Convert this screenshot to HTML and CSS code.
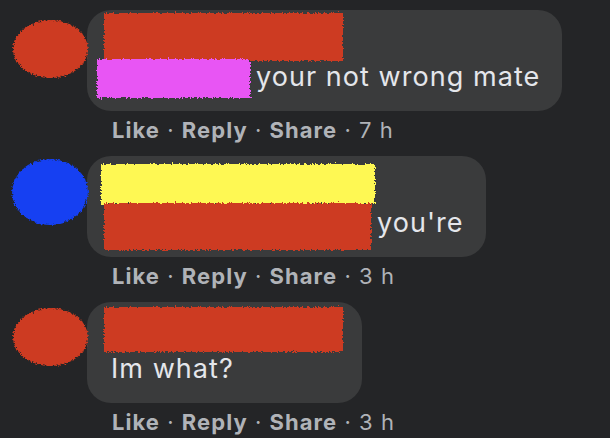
FILE: index.html
```html
<!DOCTYPE html>
<html lang="en">
<head>
    <meta charset="UTF-8">
    <title>Comments</title>
    <link rel="stylesheet" href="styles.css">
</head>
<body>
    <svg class="defs" width="0" height="0" aria-hidden="true">
        <filter id="rough" x="-10%" y="-10%" width="120%" height="120%">
            <feTurbulence type="fractalNoise" baseFrequency="0.55" numOctaves="2" seed="3" result="noise"/>
            <feDisplacementMap in="SourceGraphic" in2="noise" scale="5" xChannelSelector="R" yChannelSelector="G"/>
        </filter>
    </svg>

    <div class="thread">
        <div class="comment">
            <div class="avatar avatar-red"></div>
            <div class="comment-body">
                <div class="bubble">
                    <div class="name">
                        <span class="scribble red name-1"></span>
                    </div>
                    <div class="text">
                        <span class="scribble pink tag-1"></span>
                        <span>your not wrong mate</span>
                    </div>
                </div>
                <div class="actions">
                    <b>Like</b> · <b>Reply</b> · <b>Share</b> · 7 h
                </div>
            </div>
        </div>

        <div class="comment">
            <div class="avatar avatar-blue"></div>
            <div class="comment-body">
                <div class="bubble">
                    <div class="name">
                        <span class="scribble yellow name-2"></span>
                    </div>
                    <div class="text">
                        <span class="scribble red tag-2"></span>
                        <span>you're</span>
                    </div>
                </div>
                <div class="actions">
                    <b>Like</b> · <b>Reply</b> · <b>Share</b> · 3 h
                </div>
            </div>
        </div>

        <div class="comment">
            <div class="avatar avatar-red avatar-3"></div>
            <div class="comment-body">
                <div class="bubble">
                    <div class="name">
                        <span class="scribble red name-3"></span>
                    </div>
                    <div class="text">
                        <span>Im what?</span>
                    </div>
                </div>
                <div class="actions">
                    <b>Like</b> · <b>Reply</b> · <b>Share</b> · 3 h
                </div>
            </div>
        </div>
    </div>
</body>
</html>
```

FILE: styles.css
```css
* {
    margin: 0;
    padding: 0;
    box-sizing: border-box;
}

body {
    background: #242527;
    font-family: Inter, "Noto Sans", sans-serif;
    color: #e4e6eb;
    overflow: hidden;
}

.defs {
    position: absolute;
}

.thread {
    padding: 10px 0 0 13px;
}

.comment {
    display: flex;
    align-items: flex-start;
}

/* avatars */
.avatar {
    width: 75px;
    height: 58px;
    border-radius: 50%;
    margin-top: 10px;
    flex-shrink: 0;
    filter: url(#rough);
}

.avatar-red {
    background: #cd3a20;
}

.avatar-blue {
    background: #1240f2;
    height: 66px;
    margin-top: 3px;
    margin-left: -1px;
    width: 76px;
}

.avatar-3 {
    margin-top: 6px;
}

.comment-body {
    display: flex;
    flex-direction: column;
    align-items: flex-start;
    margin-left: -1px;
}

/* bubble */
.bubble {
    background: #3a3b3c;
    border-radius: 24px;
    padding: 0 22px 17px 24px;
}

.name {
    height: 50px;
    display: flex;
    align-items: center;
}

.text {
    height: 34px;
    display: flex;
    align-items: flex-start;
    font-size: 27px;
    line-height: 34px;
    letter-spacing: 1.05px;
    white-space: nowrap;
}

.scribble {
    display: block;
    flex-shrink: 0;
    filter: url(#rough);
}

.red {
    background: #cd3a20;
}

.pink {
    background: #e855f4;
}

.yellow {
    background: #fef853;
}

.name-1 {
    width: 239px;
    height: 48px;
    margin: 4px 0 0 -7px;
}

.tag-1 {
    width: 153px;
    height: 39px;
    margin: -1px 6px 0 -14px;
}

.name-2 {
    width: 274px;
    height: 40px;
    margin: 6px -8px 0 -10px;
}

.tag-2 {
    width: 267px;
    height: 47px;
    margin: -3px 6px 0 -7px;
}

.name-3 {
    width: 239px;
    height: 45px;
    margin: 4px -3px 0 -7px;
}

/* actions */
.actions {
    margin: 4px 0 11px 25px;
    height: 30px;
    line-height: 30px;
    font-size: 22px;
    letter-spacing: 1.05px;
    color: #b0b3b8;
    white-space: nowrap;
}

.actions b {
    font-weight: 700;
}
```
